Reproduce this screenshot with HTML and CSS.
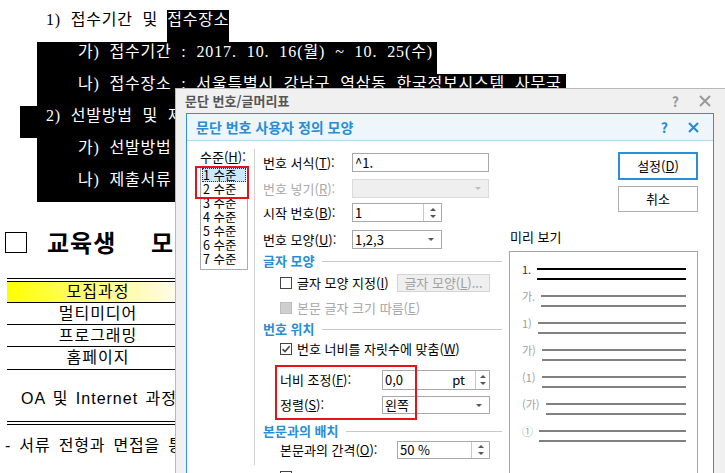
FILE: index.html
```html
<!DOCTYPE html>
<html lang="ko">
<head>
<meta charset="utf-8">
<title>문단 번호 사용자 정의 모양</title>
<link rel="stylesheet" href="styles.css">
</head>
<body>
<div class="doc">
  <div class="line"><span class="lead">1) 접수기간 및</span><span class="hl">접수장소</span></div>
  <div class="line"><span class="hl sub">가) 접수기간 : <span class="date">2017. 10. 16(월) ~ 10. 25(수)</span></span></div>
  <div class="line"><span class="hl sub">나) 접수장소 : 서울특별시 강남구 역삼동 한국정보시스템 사무국</span></div>
  <div class="line"><span class="hl main2 grow">2) 선발방법 및 제출서류</span></div>
  <div class="line"><span class="hl sub grow">가) 선발방법 : 서류전형 및 면접</span></div>
  <div class="line"><span class="hl sub grow">나) 제출서류 : 입학원서 1부</span></div>

  <div class="heading"><span class="sq"></span><span>교육생 모집 안내</span></div>

  <div class="tbl">
    <div class="trow tr1"><div class="tcell grad">모집과정</div></div>
    <div class="trow tr2"><div class="tcell">멀티미디어</div></div>
    <div class="trow tr3"><div class="tcell">프로그래밍</div></div>
    <div class="trow tr4"><div class="tcell">홈페이지</div></div>
    <div class="oa">OA 및 Internet 과정</div>
  </div>
  <div class="note">- 서류 전형과 면접을 통하여 선발</div>
</div>

<div class="win">
  <div class="win-title">
    <span class="win-name">문단 번호/글머리표</span>
    <span class="win-help">?</span>
    <svg class="win-close" width="12" height="12" viewBox="0 0 12 12"><path d="M1 1L11 11M11 1L1 11" stroke="#9a9a9a" stroke-width="2"/></svg>
  </div>
  <div class="dlg">
    <div class="dlg-title">
      <span class="dlg-name">문단 번호 사용자 정의 모양</span>
      <span class="dlg-help">?</span>
      <svg class="dlg-close" width="11" height="11" viewBox="0 0 11 11"><path d="M1 1L10 10M10 1L1 10" stroke="#2a8dd4" stroke-width="2.2"/></svg>
    </div>
    <div class="dlg-body">
      <div class="levels">
        <div class="lv-lbl">수준(<u>H</u>):</div>
        <div class="lv-list">
          <div class="lv sel">1 수준</div>
          <div class="lv">2 수준</div>
          <div class="lv">3 수준</div>
          <div class="lv">4 수준</div>
          <div class="lv">5 수준</div>
          <div class="lv">6 수준</div>
          <div class="lv">7 수준</div>
        </div>
      </div>
      <div class="vsep"></div>
      <div class="form">
        <div class="frow r1"><span class="flbl">번호 서식(<u>T</u>):</span><div class="fld w-long">^1.</div></div>
        <div class="frow r2 dis"><span class="flbl">번호 넣기(<u>R</u>):</span><div class="fld w-long fld-dis"><span class="caret caret-dis"></span></div></div>
        <div class="frow r3"><span class="flbl">시작 번호(<u>B</u>):</span><div class="fld w-short"><span>1</span><span class="spin"><i class="up"></i><i class="down"></i></span></div></div>
        <div class="frow r4"><span class="flbl">번호 모양(<u>U</u>):</span><div class="fld w-short"><span>1,2,3</span><span class="caret"></span></div></div>
        <div class="sect s1">글자 모양</div>
        <div class="frow c1 ind"><span class="cb"></span><span>글자 모양 지정(<u>I</u>)</span><span class="btn-dis">글자 모양(<u>L</u>)...</span></div>
        <div class="frow c2 ind dis"><span class="cb cb-dis"></span><span>본문 글자 크기 따름(<u>E</u>)</span></div>
        <div class="sect s2">번호 위치</div>
        <div class="frow c3 ind"><span class="cb"><svg width="10" height="10" viewBox="0 0 10 10"><path d="M1.5 5.2L4 7.6L8.6 2.2" fill="none" stroke="#444" stroke-width="1.6"/></svg></span><span>번호 너비를 자릿수에 맞춤(<u>W</u>)</span></div>
        <div class="frow r5 ind"><span class="flbl">너비 조정(<u>F</u>):</span><div class="fld w-pos"><span>0,0</span><span class="unit">pt</span><span class="spin spin-narrow"><i class="up"></i><i class="down"></i></span></div></div>
        <div class="frow r6 ind"><span class="flbl">정렬(<u>S</u>):</span><div class="fld w-pos"><span>왼쪽</span><span class="caret"></span></div></div>
        <div class="sect s3">본문과의 배치</div>
        <div class="frow r7 ind"><span class="flbl wide">본문과의 간격(<u>O</u>):</span><div class="fld w-gap"><span>50 %</span><span class="spin"><i class="up"></i><i class="down"></i></span></div></div>
        <div class="frow r8 ind"><span class="cb"></span></div>
      </div>
      <div class="side">
        <div class="btn btn-ok">설정(<u>D</u>)</div>
        <div class="btn btn-cancel">취소</div>
        <div class="pv-lbl">미리 보기</div>
        <div class="preview">
          <div class="prow"><span class="plabel first">1.</span><div class="plines"><i class="pl dark"></i><i class="pl dark"></i></div></div>
          <div class="prow"><span class="plabel">가.</span><div class="plines"><i class="pl"></i><i class="pl"></i></div></div>
          <div class="prow"><span class="plabel">1)</span><div class="plines"><i class="pl"></i><i class="pl"></i></div></div>
          <div class="prow"><span class="plabel">가)</span><div class="plines"><i class="pl"></i><i class="pl"></i></div></div>
          <div class="prow"><span class="plabel">(1)</span><div class="plines"><i class="pl"></i><i class="pl"></i></div></div>
          <div class="prow"><span class="plabel">(가)</span><div class="plines"><i class="pl"></i><i class="pl"></i></div></div>
          <div class="prow"><span class="plabel">①</span><div class="plines"><i class="pl"></i><i class="pl"></i></div></div>
        </div>
      </div>
    </div>
  </div>
</div>

<div class="mark mark-levels"></div>
<div class="mark mark-pos"></div>
</body>
</html>
```

FILE: styles.css
```css
* { box-sizing: border-box; }
html, body { margin: 0; padding: 0; }
body {
  width: 725px;
  height: 473px;
  overflow: hidden;
  position: relative;
  background: #fff;
  font-family: "Noto Sans CJK KR", sans-serif;
  color: #000;
}

/* ---------- background document ---------- */
.doc {
  padding-top: 10px;
  font-family: "Liberation Serif", "Noto Sans CJK KR", serif;
  font-size: 16px;
  letter-spacing: 0.8px;
}
.line {
  display: flex;
  align-items: flex-start;
  height: 32px;
  line-height: 18px;
  white-space: nowrap;
  word-spacing: 5px;
}
.lead { margin-left: 46px; margin-right: 9px; padding-top: 1px; }
.hl {
  display: block;
  height: 32px;
  padding-top: 1px;
  background: #000;
  color: #fff;
}
.date { letter-spacing: 0.9px; }
.sub { margin-left: 37px; padding-left: 41px; padding-right: 4px; }
.main2 { margin-left: 20px; padding-left: 26px; }
.grow { flex: 1; }

.heading {
  display: flex;
  align-items: center;
  height: 28px;
  margin-top: 26px;
  padding-left: 5px;
  font-family: "Noto Sans CJK KR", sans-serif;
  font-size: 24px;
  font-weight: 700;
  letter-spacing: 1px;
  word-spacing: 27px;
  line-height: 28px;
  white-space: nowrap;
}
.sq {
  width: 22px;
  height: 21px;
  border: 1px solid #000;
  margin-right: 20px;
  flex: none;
}

.tbl {
  margin-top: 22px;
  margin-left: 7px;
  width: 720px;
  border-top: 4px double #000;
  font-family: "Liberation Sans", "Noto Sans CJK KR", sans-serif;
  font-size: 16px;
  letter-spacing: 1px;
}
.trow { display: flex; border-bottom: 1px solid #000; }
.tcell { width: 182px; text-align: center; white-space: nowrap; }
.tr1 .tcell { height: 20px; line-height: 20px; }
.tr2 .tcell { height: 21px; line-height: 21px; }
.tr3 .tcell { height: 21px; line-height: 21px; }
.tr4 .tcell { height: 22px; line-height: 22px; }
.grad { background: linear-gradient(to right, #ffff00 0%, #fffbd8 85%, #ffffff 100%); }
.oa {
  height: 55px;
  padding-left: 14px;
  padding-top: 2px;
  display: flex;
  align-items: center;
  border-bottom: 4px double #000;
  word-spacing: 2px;
  white-space: nowrap;
}
.note {
  margin-top: 12px;
  padding-left: 5px;
  line-height: 18px;
  font-family: "Liberation Sans", "Noto Sans CJK KR", sans-serif;
  word-spacing: 3px;
  white-space: nowrap;
}

/* ---------- outer window ---------- */
.win {
  position: absolute;
  left: 175px;
  top: 88px;
  width: 560px;
  height: 400px;
  background: #f0f0f0;
  border: 1px solid #b9b9b9;
}
.win-title {
  display: flex;
  align-items: center;
  height: 24px;
  padding-left: 9px;
  font-size: 13px;
  font-weight: 700;
  color: #555;
  line-height: 16px;
}
.win-help {
  margin-left: auto;
  margin-right: 20px;
  color: #9a9a9a;
  font-size: 14px;
  font-weight: 700;
}
.win-close { margin-right: 23px; }

/* ---------- inner dialog ---------- */
.dlg {
  margin-left: 10px;
  width: 528px;
  height: 380px;
  border: 1px solid #2d93d6;
  background: #fff;
}
.dlg-title {
  display: flex;
  align-items: center;
  height: 27px;
  padding-left: 9px;
  padding-right: 14px;
  background: #eef6fb;
  border-bottom: 1px solid #b5d7ee;
  color: #2a8dd4;
  font-size: 14px;
  font-weight: 700;
  line-height: 16px;
}
.dlg-help { margin-left: auto; margin-right: 20px; font-size: 14px; }

.dlg-body {
  display: flex;
  align-items: flex-start;
  padding-left: 13px;
  font-size: 13px;
  line-height: 16px;
}

.levels { width: 48px; padding-top: 8px; flex: none; }
.lv-lbl { line-height: 16px; white-space: nowrap; }
.lv-list {
  margin-top: 1px;
  height: 104px;
  border: 1px solid #ababab;
  padding: 1px;
}
.lv { height: 14px; line-height: 14px; padding-left: 1px; white-space: nowrap; font-size: 12.5px; }
.lv.sel { background: #cce8ff; outline: 1px dotted #333; outline-offset: -1px; }

.vsep {
  width: 1px;
  height: 316px;
  margin-top: 8px;
  margin-left: 6px;
  background: #d0d0d0;
  flex: none;
}

.form { width: 239px; margin-left: 8px; padding-top: 12px; flex: none; }
.frow { display: flex; align-items: center; height: 19px; white-space: nowrap; }
.r2 { margin-top: 7px; }
.r3 { margin-top: 5px; }
.r4 { margin-top: 8px; }
.c1 { margin-top: 4px; }
.c2 { margin-top: 7px; height: 18px; }
.c3 { margin-top: 3px; height: 18px; }
.r5 { margin-top: 12px; height: 20px; }
.r6 { margin-top: 6px; height: 18px; }
.r7 { margin-top: 2px; height: 18px; }
.r8 { margin-top: 9px; height: 18px; }
.ind { padding-left: 17px; }
.flbl { width: 89px; flex: none; }
.ind .flbl { width: 102px; }
.ind .flbl.wide { width: 117px; }
.dis { color: #a8a8a8; }

.fld {
  display: flex;
  align-items: center;
  height: 100%;
  padding-left: 2px;
  border: 1px solid #a8a8a8;
  background: #fff;
  color: #000;
  flex: none;
}
.w-long { width: 137px; }
.w-short { width: 90px; }
.w-pos { width: 108px; }
.w-gap { width: 93px; }
.fld-dis { background: #efefef; border-color: #dadada; }

.caret {
  margin-left: auto;
  margin-right: 7px;
  width: 0;
  height: 0;
  border-left: 3px solid transparent;
  border-right: 3px solid transparent;
  border-top: 3px solid #555;
}
.caret-dis { border-top-color: #bdbdbd; }
.spin {
  margin-left: auto;
  width: 18px;
  height: 100%;
  border-left: 1px solid #c8c8c8;
  display: flex;
  flex-direction: column;
  align-items: center;
  justify-content: center;
  gap: 4px;
}
.spin-narrow { width: 14px; margin-left: 0; }
.up, .down {
  display: block;
  width: 0;
  height: 0;
  border-left: 3px solid transparent;
  border-right: 3px solid transparent;
}
.up { border-bottom: 3px solid #555; }
.down { border-top: 3px solid #555; }
.unit { margin-left: auto; margin-right: 10px; }

.sect {
  display: flex;
  align-items: center;
  height: 16px;
  margin-top: 4px;
  color: #2a8dd4;
  font-weight: 700;
  white-space: nowrap;
}
.sect::after {
  content: "";
  flex: 1;
  height: 1px;
  margin-left: 8px;
  background: #c8c8c8;
}
.s3 { margin-top: 9px; }

.cb {
  width: 12px;
  height: 12px;
  margin-right: 5px;
  border: 1px solid #444;
  background: #fff;
  display: flex;
  align-items: center;
  justify-content: center;
  flex: none;
}
.cb-dis { background: #cfcfcf; border-color: #bdbdbd; }
.btn-dis {
  margin-left: auto;
  margin-right: 12px;
  width: 93px;
  height: 18px;
  line-height: 16px;
  text-align: center;
  background: #efefef;
  border: 1px solid #d4d4d4;
  color: #a0a0a0;
}

.side {
  width: 189px;
  margin-left: 7px;
  padding-top: 11px;
  display: flex;
  flex-direction: column;
  flex: none;
}
.btn {
  align-self: flex-end;
  width: 80px;
  display: flex;
  align-items: center;
  justify-content: center;
  background: #fff;
}
.btn-ok { height: 28px; border: 2px solid #2b8fd6; }
.btn-cancel { height: 26px; margin-top: 6px; border: 1px solid #adadad; }
.pv-lbl { margin-top: 17px; padding-left: 1px; line-height: 16px; }
.preview {
  margin-top: 6px;
  height: 240px;
  border: 1px solid #a5a5a5;
  padding: 12px 11px 0 12px;
}
.prow { display: flex; align-items: flex-start; height: 27px; }
.plabel {
  font-size: 11px;
  line-height: 12px;
  margin-top: -1px;
  color: #a0a0a0;
  white-space: nowrap;
}
.plabel.first { color: #333; }
.plines { flex: 1; margin-left: 6px; }
.pl { display: block; height: 2px; margin-top: 4px; background: #808080; }
.pl + .pl { margin-top: 8px; }
.pl.dark { background: #000; }

/* ---------- red annotations ---------- */
.mark { position: absolute; border: 2px solid #e5121b; }
.mark-levels { left: 195px; top: 166px; width: 54px; height: 33px; }
.mark-pos { left: 275px; top: 365px; width: 142px; height: 55px; }
```
